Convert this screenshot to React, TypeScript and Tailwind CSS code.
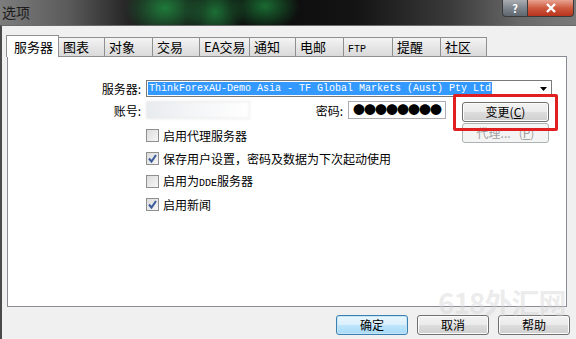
import React from 'react';

const cjk = "font-['Noto_Sans_CJK_SC','Noto_Sans',sans-serif]";

const tabs = [
  { label: '服务器', w: 'w-[53px]', active: true },
  { label: '图表', w: 'w-[46px]' },
  { label: '对象', w: 'w-[48px]' },
  { label: '交易', w: 'w-[47px]' },
  { label: 'EA交易', w: 'w-[50px]' },
  { label: '通知', w: 'w-[46px]' },
  { label: '电邮', w: 'w-[48px]' },
  { label: 'FTP', w: 'w-[49px]' },
  { label: '提醒', w: 'w-[48px]' },
  { label: '社区', w: 'w-[46px]' },
];

const options = [
  { label: '启用代理服务器', checked: false },
  { label: '保存用户设置，密码及数据为下次起动使用', checked: true },
  { label: '启用为DDE服务器', checked: false },
  { label: '启用新闻', checked: true },
];

const Checkbox = ({ checked }: { checked: boolean }) => (
  <span className="w-[13px] h-[13px] border border-[#8e8f8f] bg-[linear-gradient(135deg,#dcdcdc,#f6f6f6)] flex items-center justify-center shrink-0">
    {checked && (
      <svg width="11" height="11" viewBox="0 0 11 11">
        <path d="M2 5.5 L4.5 8.5 L9 2" fill="none" stroke="#3a5a9a" strokeWidth="2" />
      </svg>
    )}
  </span>
);

const WinButton = ({
  children,
  primary,
  disabled,
  className = '',
}: {
  children: React.ReactNode;
  primary?: boolean;
  disabled?: boolean;
  className?: string;
}) => (
  <div
    className={`h-[20px] rounded-[3px] border flex items-center justify-center text-[12px] ${
      disabled
        ? 'border-[#adb2b5] bg-[#f4f4f4] text-[#a0a0a0]'
        : primary
        ? 'border-[#3c7fb1] bg-[linear-gradient(#eaf6fd,#d9f0fc_50%,#bee6fd_51%,#a7d9f5)] text-black shadow-[inset_0_0_0_1px_#c4e5f6]'
        : 'border-[#707070] bg-[linear-gradient(#f2f2f2,#ebebeb_50%,#dddddd_51%,#cfcfcf)] text-black shadow-[inset_0_0_0_1px_#fcfcfc]'
    } ${className}`}
  >
    {children}
  </div>
);

export default function App() {
  return (
    <div className={`w-[576px] h-[339px] relative overflow-hidden bg-[#f0f0f0] ${cjk}`}>
      {/* title bar */}
      <div className="h-[25px] relative bg-[radial-gradient(ellipse_40px_30px_at_165px_8px,#1f7a3a,transparent),radial-gradient(ellipse_30px_30px_at_215px_12px,#1c6e35,transparent),radial-gradient(ellipse_35px_25px_at_265px_6px,#1a6a32,transparent),linear-gradient(to_right,#7d7d7d_0%,#5a5a5a_12%,#1c1c1c_24%,#0b0b0b_45%,#141414_62%,#3a3a3a_78%,#686868_90%,#7a7a7a_100%)]">
        <span className="absolute left-[2px] top-[2px] text-[14px] text-[#1c1c1c]">选项</span>
        <div className="absolute right-[2px] top-0 flex">
          <div className="w-[26px] h-[17px] rounded-bl-[4px] border border-t-0 border-[#3a3a3a] bg-[linear-gradient(#a9adb2,#7f858c_50%,#5f666e)] flex items-center justify-center text-white text-[11px] font-bold">
            ?
          </div>
          <div className="w-[46px] h-[17px] rounded-br-[4px] border border-t-0 border-l-0 border-[#3a3a3a] bg-[linear-gradient(#e8a393,#cf5a3f_50%,#b8321c)] flex items-center justify-center">
            <svg width="12" height="10" viewBox="0 0 12 10">
              <path d="M2 1 L10 9 M10 1 L2 9" stroke="white" strokeWidth="2.4" />
            </svg>
          </div>
        </div>
      </div>

      {/* window body */}
      <div className="h-[314px] border-l-[2px] border-[#4a4a4a] border-t border-t-[#6a6a6a] pt-[9px]">
        {/* tabs */}
        <div className="flex items-end h-[22px] ml-[4px] relative z-10 -mb-[1px]">
          {tabs.map((t) =>
            t.active ? (
              <div
                key={t.label}
                className={`${t.w} h-[22px] bg-white border border-b-0 border-[#8e8f8f] pl-[7px] pt-[1px] text-[13px]`}
              >
                {t.label}
              </div>
            ) : (
              <div
                key={t.label}
                className={`${t.w} h-[20px] border border-l-0 border-[#8e8f8f] bg-[linear-gradient(#f4f4f4,#e6e6e6_50%,#d9d9d9)] pl-[4px] text-[13px] leading-[18px]`}
              >
                {t.label === 'FTP' ? <span className="font-['Liberation_Mono',monospace] text-[10px]">FTP</span> : t.label}
              </div>
            )
          )}
        </div>

        {/* panel */}
        <div className="ml-[5px] w-[560px] h-[251px] bg-white border border-[#898c95] pt-[23px] text-[12px]">
          <div className="flex items-center h-[17px]">
            <span className="w-[135px] text-right pr-[2px]">服务器:</span>
            <div className="ml-[3px] w-[406px] h-[17px] border border-[#7a7a7a] flex items-center pl-[1px] relative">
              <span className="bg-[#3399ff] text-white font-['Liberation_Mono',monospace] text-[10px] leading-[13px] px-[1px] whitespace-pre">
                ThinkForexAU-Demo Asia - TF Global Markets (Aust) Pty Ltd
              </span>
              <svg className="absolute right-[4px] top-[6px]" width="7" height="4" viewBox="0 0 7 4">
                <path d="M0 0 H7 L3.5 4 Z" fill="#000" />
              </svg>
            </div>
          </div>

          <div className="flex items-start mt-[4px]">
            <span className="w-[135px] text-right pr-[2px] leading-[18px] mt-[1px]">账号:</span>
            <div className="ml-[3px] w-[104px] h-[18px] border border-[#e6e6e6] bg-[linear-gradient(to_right,#e8ebef,#f3f4f6_40%,#ffffff)] blur-[1px]" />
            <span className="w-[95px] text-right pr-[2px] leading-[18px] mt-[1px]">密码:</span>
            <div className="ml-[3px] w-[98px] h-[18px] border border-[#abadb3] flex items-center pl-[4px] text-[12px] tracking-[-1px] leading-none">
              ●●●●●●●●
            </div>
            <div className="ml-[16px] mt-[1px] relative">
              <WinButton className="w-[87px]">
                变更(<span className="underline">C</span>)
              </WinButton>
              <div className="absolute -left-[9px] -right-[9px] -top-[8px] -bottom-[9px] border-[3px] border-[#e02020] rounded-[2px]" />
            </div>
          </div>

          <div className="flex">
            <div className="ml-[138px] w-[316px] pt-[2px] flex flex-col">
              {options.map((o) => (
                <div key={o.label} className="h-[23px] flex items-center gap-[4px]">
                  <Checkbox checked={o.checked} />
                  <span>
                    {o.label === '启用为DDE服务器' ? (
                      <>
                        启用为<span className="font-['Liberation_Mono',monospace] text-[10px]">DDE</span>服务器
                      </>
                    ) : (
                      o.label
                    )}
                  </span>
                </div>
              ))}
            </div>
            <WinButton disabled className="w-[87px] mt-[1px]">
              代理...&nbsp;&nbsp;&nbsp;(<span className="underline">P</span>)
            </WinButton>
          </div>
        </div>

        {/* bottom buttons */}
        <div className="flex justify-end gap-[9px] pr-[6px] mt-[8px]">
          <WinButton primary className="w-[72px]">确定</WinButton>
          <WinButton className="w-[72px]">取消</WinButton>
          <WinButton className="w-[72px]">帮助</WinButton>
        </div>
      </div>

      {/* watermark */}
      <div className="absolute left-[438px] top-[288px] whitespace-nowrap text-[28px] leading-none font-bold text-[#d4d4d4]/45 tracking-[-1px] pointer-events-none">
        618外汇网
      </div>
    </div>
  );
}
